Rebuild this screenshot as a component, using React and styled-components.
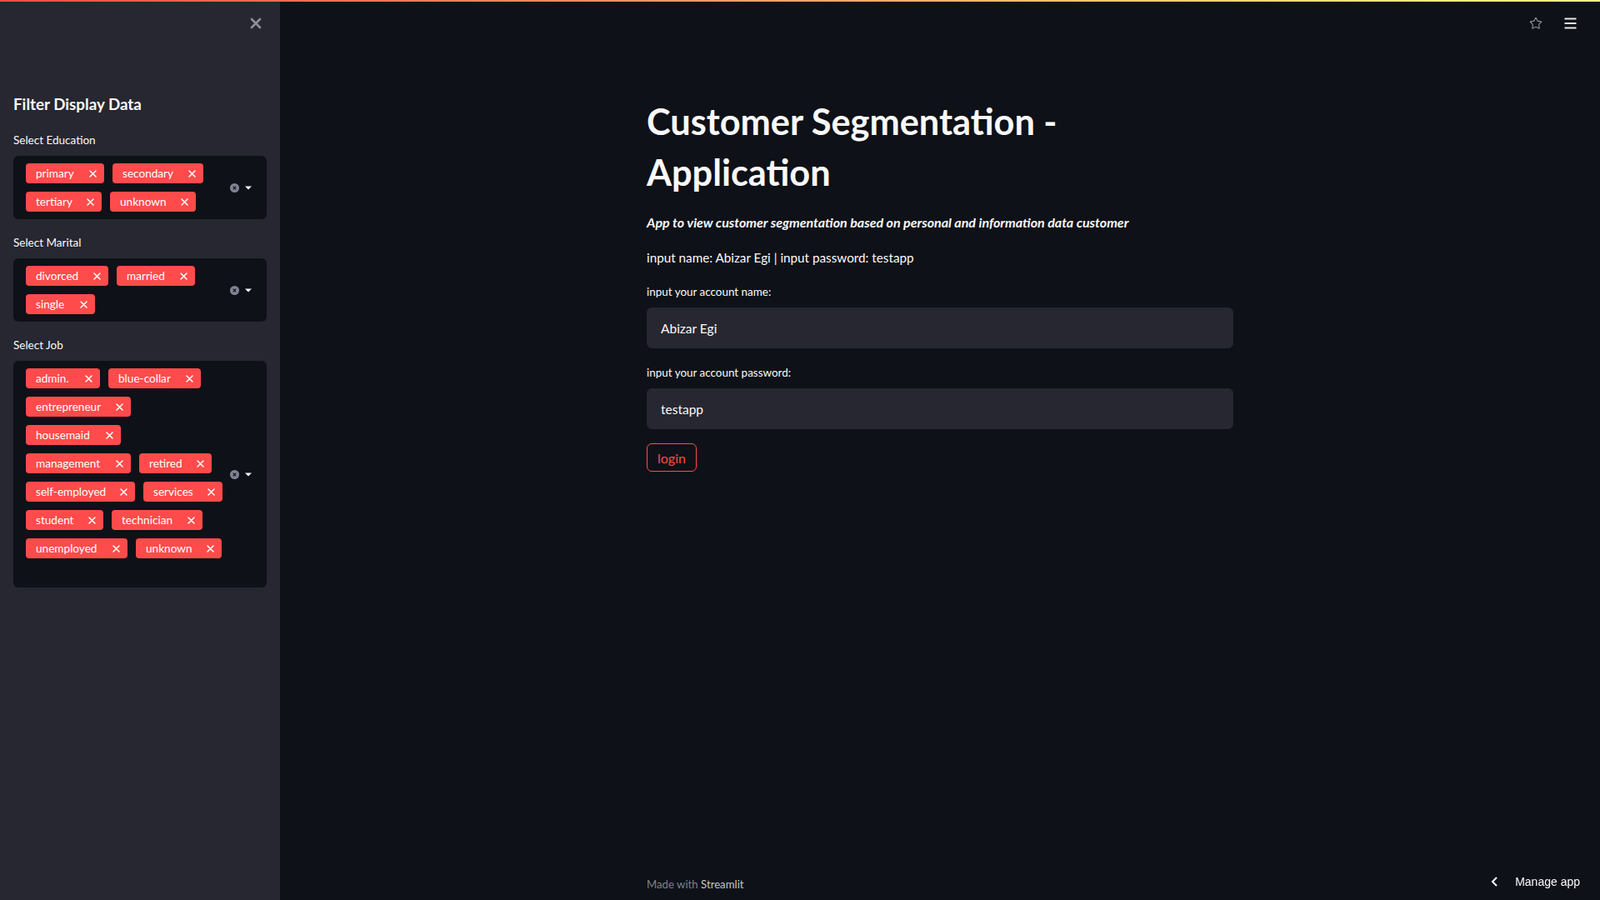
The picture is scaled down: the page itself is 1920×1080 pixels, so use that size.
import React from 'react';
import styled, { createGlobalStyle } from 'styled-components';
import { Star } from 'lucide-react';

const GlobalStyle = createGlobalStyle`
  html, body { margin: 0; padding: 0; background: #0e1117; }
  body { font-family: Lato, "Noto Sans", sans-serif; color: #fafafa; }
  * { box-sizing: border-box; }
`;

const Page = styled.div`
  display: flex;
  flex-direction: column;
  height: 100vh;
  overflow: hidden;
`;

const Decoration = styled.div`
  height: 2px;
  flex: none;
  background: linear-gradient(90deg, #ff4b4b, #fffd80);
`;

const Body = styled.div`
  flex: 1;
  display: flex;
  min-height: 0;
`;

const Sidebar = styled.aside`
  width: 336px;
  flex: none;
  background: #262730;
  padding: 0 16px;
  display: flex;
  flex-direction: column;
`;

const CloseRow = styled.div`
  height: 52px;
  display: flex;
  align-items: center;
  justify-content: flex-end;
`;

const CloseButton = styled.button`
  width: 26px;
  height: 26px;
  padding: 0;
  border: none;
  background: transparent;
  display: flex;
  align-items: center;
  justify-content: center;
  color: #8e9099;
`;

const SidebarTitle = styled.h2`
  margin: 57px 0 0;
  font-size: 18.8px;
  line-height: 28px;
  font-weight: 700;
  color: #fafafa;
`;

const Section = styled.div`
  margin-top: ${(p) => p.$top}px;
`;

const Label = styled.div`
  font-size: 13.5px;
  line-height: 20px;
  margin-bottom: 9px;
  color: #fafafa;
`;

const MultiBox = styled.div`
  background: #0e1117;
  border-radius: 6px;
  display: flex;
  align-items: center;
`;

const TagList = styled.div`
  flex: 1;
  display: flex;
  flex-wrap: wrap;
  gap: 10px;
  padding: 9px 5px 9px 15px;
`;

const Tag = styled.span`
  flex: none;
  width: ${(p) => p.$w}px;
  height: 24px;
  border-radius: 4px;
  background: #ff4b4b;
  color: #ffffff;
  font-size: 13.6px;
  line-height: 24px;
  padding: 0 9px 0 12px;
  display: flex;
  align-items: center;
  justify-content: space-between;
  white-space: nowrap;
`;

const TagInput = styled.span`
  flex: none;
  width: 10px;
  height: 16px;
`;

const Indicators = styled.div`
  flex: none;
  display: flex;
  align-items: center;
  gap: 7px;
  padding-right: 18px;
`;

const Main = styled.main`
  flex: 1;
  min-width: 0;
  display: flex;
  flex-direction: column;
`;

const Header = styled.header`
  height: 52px;
  flex: none;
  display: flex;
  align-items: center;
  justify-content: flex-end;
  gap: 9px;
  padding-right: 20px;
`;

const IconButton = styled.button`
  width: 32px;
  height: 32px;
  padding: 0;
  border: none;
  background: transparent;
  display: flex;
  align-items: center;
  justify-content: center;
  color: ${(p) => p.$color};
`;

const Content = styled.div`
  flex: 1;
  width: 736px;
  margin: 0 auto;
  padding: 0 16px;
`;

const Title = styled.h1`
  margin: 61px 0 0;
  font-size: 43.3px;
  line-height: 61px;
  font-weight: 700;
  color: #fafafa;
`;

const Subtitle = styled.p`
  margin: 18px 0 0;
  font-size: 16px;
  line-height: 24px;
  font-weight: 700;
  font-style: italic;
`;

const Info = styled.p`
  margin: 18px 0 0;
  font-size: 15.25px;
  line-height: 24px;
`;

const FieldLabel = styled.div`
  margin: 19px 0 9px;
  font-size: 13.45px;
  line-height: 20px;
`;

const TextInput = styled.input`
  display: block;
  width: 100%;
  height: 49px;
  margin: 0;
  padding: 0 16px;
  border: 1px solid #262730;
  border-radius: 6px;
  background: #262730;
  color: #fafafa;
  font-family: Lato, "Noto Sans", sans-serif;
  font-size: 15.5px;
  outline: none;
`;

const Button = styled.button`
  margin-top: 17px;
  height: 34px;
  padding: 0 12px;
  border: 1px solid #ff4b4b;
  border-radius: 6px;
  background: transparent;
  color: #ff4b4b;
  font-family: Lato, "Noto Sans", sans-serif;
  font-size: 16px;
`;

const Footer = styled.footer`
  width: 736px;
  margin: 0 auto;
  padding: 0 16px 9px;
  font-size: 13.2px;
  line-height: 20px;
  color: #7f8288;
`;

const FooterBrand = styled.span`
  color: #c4c6ca;
`;

const ManageApp = styled.div`
  position: fixed;
  right: 24px;
  bottom: 12px;
  display: flex;
  align-items: center;
  gap: 19px;
  font-family: "Liberation Sans", Arial, sans-serif;
  font-size: 14px;
  line-height: 20px;
  color: #fafafa;
`;

const TagX = () => (
  <svg width="9" height="9" viewBox="0 0 9 9">
    <path d="M1 1 L8 8 M8 1 L1 8" stroke="#fff" strokeWidth="1.5" strokeLinecap="round" />
  </svg>
);

const ClearIcon = () => (
  <svg width="11" height="11" viewBox="0 0 11 11">
    <circle cx="5.5" cy="5.5" r="5.5" fill="#808495" />
    <path d="M3.7 3.7 L7.3 7.3 M7.3 3.7 L3.7 7.3" stroke="#0e1117" strokeWidth="1.2" />
  </svg>
);

const ArrowIcon = () => (
  <svg width="8" height="5" viewBox="0 0 8 5">
    <path d="M0 0.5 L8 0.5 L4 4.5 Z" fill="#fafafa" />
  </svg>
);

const MultiSelect = ({ items }) => (
  <MultiBox>
    <TagList>
      {items.map((it) => (
        <Tag key={it.label} $w={it.w}>
          {it.label}
          <TagX />
        </Tag>
      ))}
      <TagInput />
    </TagList>
    <Indicators>
      <ClearIcon />
      <ArrowIcon />
    </Indicators>
  </MultiBox>
);

const education = [
  { label: 'primary', w: 94 },
  { label: 'secondary', w: 109 },
  { label: 'tertiary', w: 91 },
  { label: 'unknown', w: 103 },
];

const marital = [
  { label: 'divorced', w: 99 },
  { label: 'married', w: 94 },
  { label: 'single', w: 83 },
];

const jobs = [
  { label: 'admin.', w: 89 },
  { label: 'blue-collar', w: 111 },
  { label: 'entrepreneur', w: 126 },
  { label: 'housemaid', w: 114 },
  { label: 'management', w: 126 },
  { label: 'retired', w: 87 },
  { label: 'self-employed', w: 131 },
  { label: 'services', w: 95 },
  { label: 'student', w: 93 },
  { label: 'technician', w: 109 },
  { label: 'unemployed', w: 122 },
  { label: 'unknown', w: 103 },
];

export default function App() {
  return (
    <Page>
      <GlobalStyle />
      <Decoration />
      <Body>
        <Sidebar>
          <CloseRow>
            <CloseButton aria-label="close">
              <svg width="14" height="14" viewBox="0 0 14 14">
                <path d="M2 2 L12 12 M12 2 L2 12" stroke="currentColor" strokeWidth="2.6" strokeLinecap="round" />
              </svg>
            </CloseButton>
          </CloseRow>
          <SidebarTitle>Filter Display Data</SidebarTitle>
          <Section $top={19}>
            <Label>Select Education</Label>
            <MultiSelect items={education} />
          </Section>
          <Section $top={18}>
            <Label>Select Marital</Label>
            <MultiSelect items={marital} />
          </Section>
          <Section $top={18}>
            <Label>Select Job</Label>
            <MultiSelect items={jobs} />
          </Section>
        </Sidebar>
        <Main>
          <Header>
            <IconButton $color="#8b8e97" aria-label="star">
              <Star size={16} strokeWidth={1.7} />
            </IconButton>
            <IconButton $color="#e6e6e6" aria-label="menu">
              <svg width="15" height="14" viewBox="0 0 15 14">
                <path d="M0.5 1.5 H14.5 M0.5 7 H14.5 M0.5 12.5 H14.5" stroke="currentColor" strokeWidth="1.8" />
              </svg>
            </IconButton>
          </Header>
          <Content>
            <Title>Customer Segmentation - Application</Title>
            <Subtitle>App to view customer segmentation based on personal and information data customer</Subtitle>
            <Info>input name: Abizar Egi | input password: testapp</Info>
            <FieldLabel>input your account name:</FieldLabel>
            <TextInput defaultValue="Abizar Egi" />
            <FieldLabel>input your account password:</FieldLabel>
            <TextInput defaultValue="testapp" />
            <Button>login</Button>
          </Content>
          <Footer>
            Made with <FooterBrand>Streamlit</FooterBrand>
          </Footer>
        </Main>
      </Body>
      <ManageApp>
        <svg width="10" height="12" viewBox="0 0 10 12">
          <path d="M7 1 L2 6 L7 11" stroke="#fafafa" strokeWidth="2" fill="none" />
        </svg>
        Manage app
      </ManageApp>
    </Page>
  );
}
